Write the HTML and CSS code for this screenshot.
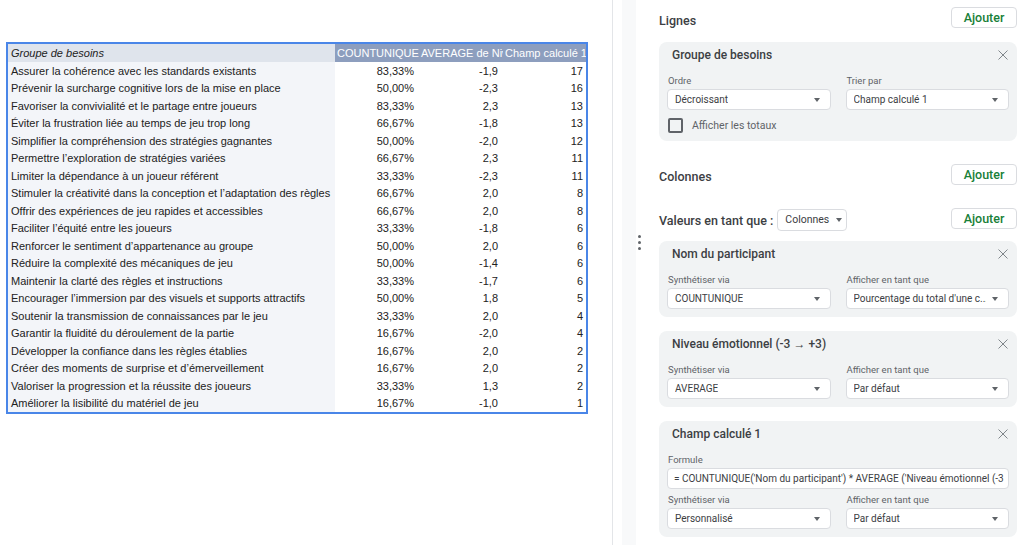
FILE: index.html
```html
<!DOCTYPE html>
<html lang="fr">
<head>
    <title>Tableau croisé dynamique</title>
    <meta charset="utf-8">
    <link rel="stylesheet" href="styles.css">
</head>
<body>
    <div class="page">
        <div class="sheet">
            <table class="pivot">
                <colgroup>
                    <col class="col-group">
                    <col class="col-num">
                    <col class="col-num">
                    <col class="col-last">
                </colgroup>
                <thead>
                    <tr>
                        <th class="head-group">Groupe de besoins</th>
                        <th>COUNTUNIQUE de Nom du participant</th>
                        <th>AVERAGE de Niveau émotionnel</th>
                        <th>Champ calculé 1</th>
                    </tr>
                </thead>
                <tbody>
                    <tr><td>Assurer la cohérence avec les standards existants</td><td>83,33%</td><td>-1,9</td><td>17</td></tr>
                    <tr><td>Prévenir la surcharge cognitive lors de la mise en place</td><td>50,00%</td><td>-2,3</td><td>16</td></tr>
                    <tr><td>Favoriser la convivialité et le partage entre joueurs</td><td>83,33%</td><td>2,3</td><td>13</td></tr>
                    <tr><td>Éviter la frustration liée au temps de jeu trop long</td><td>66,67%</td><td>-1,8</td><td>13</td></tr>
                    <tr><td>Simplifier la compréhension des stratégies gagnantes</td><td>50,00%</td><td>-2,0</td><td>12</td></tr>
                    <tr><td>Permettre l’exploration de stratégies variées</td><td>66,67%</td><td>2,3</td><td>11</td></tr>
                    <tr><td>Limiter la dépendance à un joueur référent</td><td>33,33%</td><td>-2,3</td><td>11</td></tr>
                    <tr><td>Stimuler la créativité dans la conception et l’adaptation des règles</td><td>66,67%</td><td>2,0</td><td>8</td></tr>
                    <tr><td>Offrir des expériences de jeu rapides et accessibles</td><td>66,67%</td><td>2,0</td><td>8</td></tr>
                    <tr><td>Faciliter l’équité entre les joueurs</td><td>33,33%</td><td>-1,8</td><td>6</td></tr>
                    <tr><td>Renforcer le sentiment d’appartenance au groupe</td><td>50,00%</td><td>2,0</td><td>6</td></tr>
                    <tr><td>Réduire la complexité des mécaniques de jeu</td><td>50,00%</td><td>-1,4</td><td>6</td></tr>
                    <tr><td>Maintenir la clarté des règles et instructions</td><td>33,33%</td><td>-1,7</td><td>6</td></tr>
                    <tr><td>Encourager l’immersion par des visuels et supports attractifs</td><td>50,00%</td><td>1,8</td><td>5</td></tr>
                    <tr><td>Soutenir la transmission de connaissances par le jeu</td><td>33,33%</td><td>2,0</td><td>4</td></tr>
                    <tr><td>Garantir la fluidité du déroulement de la partie</td><td>16,67%</td><td>-2,0</td><td>4</td></tr>
                    <tr><td>Développer la confiance dans les règles établies</td><td>16,67%</td><td>2,0</td><td>2</td></tr>
                    <tr><td>Créer des moments de surprise et d’émerveillement</td><td>16,67%</td><td>2,0</td><td>2</td></tr>
                    <tr><td>Valoriser la progression et la réussite des joueurs</td><td>33,33%</td><td>1,3</td><td>2</td></tr>
                    <tr><td>Améliorer la lisibilité du matériel de jeu</td><td>16,67%</td><td>-1,0</td><td>1</td></tr>
                </tbody>
            </table>
        </div>
        <div class="rail"><div class="rail-strip"></div></div>
        <aside class="editor">
            <div class="section-head section-top">
                <span class="section-label">Lignes</span>
                <button class="add">Ajouter</button>
            </div>
            <div class="card card-first">
                <div class="card-title">
                    <span>Groupe de besoins</span>
                    <svg class="close" width="10" height="10" viewBox="0 0 10 10"><path d="M0.5 0.5 L9.5 9.5 M9.5 0.5 L0.5 9.5"/></svg>
                </div>
                <div class="fields">
                    <div class="field">
                        <div class="field-label">Ordre</div>
                        <div class="select"><span>Décroissant</span><i class="caret"></i></div>
                    </div>
                    <div class="field">
                        <div class="field-label">Trier par</div>
                        <div class="select"><span>Champ calculé 1</span><i class="caret"></i></div>
                    </div>
                </div>
                <div class="check-row">
                    <span class="checkbox"></span>
                    <span>Afficher les totaux</span>
                </div>
            </div>

            <div class="section-head section-gap">
                <span class="section-label">Colonnes</span>
                <button class="add">Ajouter</button>
            </div>

            <div class="section-head section-gap">
                <span class="values-label">
                    <span class="section-label">Valeurs en tant que :</span>
                    <span class="mini-select">Colonnes<i class="caret"></i></span>
                </span>
                <button class="add">Ajouter</button>
            </div>

            <div class="card card-values">
                <div class="handle"><i></i><i></i><i></i></div>
                <div class="card-title">
                    <span>Nom du participant</span>
                    <svg class="close" width="10" height="10" viewBox="0 0 10 10"><path d="M0.5 0.5 L9.5 9.5 M9.5 0.5 L0.5 9.5"/></svg>
                </div>
                <div class="fields">
                    <div class="field">
                        <div class="field-label">Synthétiser via</div>
                        <div class="select"><span>COUNTUNIQUE</span><i class="caret"></i></div>
                    </div>
                    <div class="field">
                        <div class="field-label">Afficher en tant que</div>
                        <div class="select"><span>Pourcentage du total d'une c...</span><i class="caret"></i></div>
                    </div>
                </div>
            </div>

            <div class="card">
                <div class="card-title">
                    <span>Niveau émotionnel (-3 → +3)</span>
                    <svg class="close" width="10" height="10" viewBox="0 0 10 10"><path d="M0.5 0.5 L9.5 9.5 M9.5 0.5 L0.5 9.5"/></svg>
                </div>
                <div class="fields">
                    <div class="field">
                        <div class="field-label">Synthétiser via</div>
                        <div class="select"><span>AVERAGE</span><i class="caret"></i></div>
                    </div>
                    <div class="field">
                        <div class="field-label">Afficher en tant que</div>
                        <div class="select"><span>Par défaut</span><i class="caret"></i></div>
                    </div>
                </div>
            </div>

            <div class="card">
                <div class="card-title">
                    <span>Champ calculé 1</span>
                    <svg class="close" width="10" height="10" viewBox="0 0 10 10"><path d="M0.5 0.5 L9.5 9.5 M9.5 0.5 L0.5 9.5"/></svg>
                </div>
                <div class="field-label">Formule</div>
                <div class="formula">= COUNTUNIQUE('Nom du participant') * AVERAGE ('Niveau émotionnel (-3 → +3)')</div>
                <div class="fields fields-after">
                    <div class="field">
                        <div class="field-label">Synthétiser via</div>
                        <div class="select"><span>Personnalisé</span><i class="caret"></i></div>
                    </div>
                    <div class="field">
                        <div class="field-label">Afficher en tant que</div>
                        <div class="select"><span>Par défaut</span><i class="caret"></i></div>
                    </div>
                </div>
            </div>
        </aside>
    </div>
</body>
</html>
```

FILE: styles.css
```css
html, body {
    margin: 0;
    height: 100%;
    background: #fff;
}
.page {
    display: flex;
    width: 1024px;
    height: 545px;
    overflow: hidden;
}

/* sheet side */
.sheet {
    width: 612px;
    flex: none;
    padding: 42px 0 0 6px;
    box-sizing: border-box;
}
.pivot {
    border-collapse: collapse;
    table-layout: fixed;
    width: 582px;
    border: 2px solid #4a86e8;
    font-family: "Liberation Sans", Arial, sans-serif;
    font-size: 11px;
    color: #222;
}
.col-group { width: 328px; }
.col-num { width: 84px; }
.col-last { width: 84px; }
.pivot th {
    height: 18px;
    padding: 0 0 0 2px;
    background: #8d9ebe;
    color: #fff;
    font-weight: normal;
    text-align: left;
    white-space: nowrap;
    overflow: hidden;
    text-overflow: clip;
}
.pivot th.head-group {
    background: #dfe4ec;
    color: #222;
    font-style: italic;
    padding-left: 3px;
}
.pivot td {
    height: 17.5px;
    padding: 0 5px 0 0;
    text-align: right;
    white-space: nowrap;
    overflow: hidden;
}
.pivot td:first-child {
    text-align: left;
    padding: 0 0 0 3px;
    background: #f3f5f9;
}
.pivot td:last-child {
    padding-right: 3px;
}

/* side rail */
.rail {
    width: 24px;
    flex: none;
    border-left: 1px solid #e3e5e8;
    padding-left: 9px;
    box-sizing: border-box;
}
.rail-strip {
    width: 14px;
    height: 100%;
    background: #f8f9fa;
}

/* editor panel */
.editor {
    flex: none;
    width: 388px;
    box-sizing: border-box;
    padding: 7px 7px 0 23px;
    font-family: Roboto, "Noto Sans", sans-serif;
    color: #3c4043;
}
.section-head {
    display: flex;
    align-items: center;
    justify-content: space-between;
    height: 21px;
    font-size: 12.5px;
    font-weight: 500;
    color: #3c4043;
}
.section-label {
    padding-top: 3px;
}
.section-top .section-label {
    padding-top: 5px;
}
.section-gap {
    margin-top: 23px;
}
.add {
    width: 66px;
    height: 21px;
    padding: 0;
    border: 1px solid #dadce0;
    border-radius: 4px;
    background: #fff;
    color: #188038;
    font-family: Roboto, "Noto Sans", sans-serif;
    font-size: 12.5px;
    font-weight: 500;
}
.values-label {
    display: flex;
    align-items: center;
    gap: 4px;
}
.mini-select {
    display: inline-flex;
    align-items: center;
    justify-content: space-between;
    gap: 7px;
    width: 70px;
    height: 22px;
    margin-top: 2px;
    padding: 0 6px 0 7px;
    box-sizing: border-box;
    border: 1px solid #dadce0;
    border-radius: 4px;
    font-size: 10.5px;
    font-weight: normal;
    color: #3c4043;
}

.card {
    position: relative;
    margin-top: 14px;
    padding: 0 8px 8px;
    background: #f1f3f4;
    border-radius: 8px;
}
.card-title {
    display: flex;
    align-items: center;
    justify-content: space-between;
    height: 26px;
    padding-left: 5px;
    font-size: 12px;
    font-weight: 500;
    color: #3c4043;
}
.close {
    stroke: #80868b;
    stroke-width: 1;
    fill: none;
    margin-right: 1px;
}
.fields {
    display: grid;
    grid-template-columns: minmax(0, 1fr) minmax(0, 1fr);
    column-gap: 15px;
}
.fields-after .field-label {
    margin-top: 3px;
}
.field {
    min-width: 0;
}
.field-label {
    height: 16px;
    margin-top: 5px;
    padding-left: 1px;
    line-height: 16px;
    font-size: 9.5px;
    color: #5f6368;
}
.select, .formula {
    display: flex;
    align-items: center;
    justify-content: space-between;
    gap: 6px;
    height: 21px;
    padding: 0 10px 0 7px;
    box-sizing: border-box;
    background: #fff;
    border: 1px solid #dadce0;
    border-radius: 4px;
    font-size: 10px;
    color: #3c4043;
}
.select span {
    white-space: nowrap;
    overflow: hidden;
}
.formula {
    display: block;
    line-height: 19px;
    padding: 0 0 0 6px;
    white-space: nowrap;
    overflow: hidden;
}
.caret {
    flex: none;
    width: 0;
    height: 0;
    border-left: 3.5px solid transparent;
    border-right: 3.5px solid transparent;
    border-top: 4px solid #5f6368;
}
.check-row {
    display: flex;
    align-items: center;
    gap: 9px;
    height: 15px;
    margin-top: 8px;
    padding-left: 1px;
    font-size: 10.5px;
    color: #5f6368;
}
.checkbox {
    width: 11px;
    height: 11px;
    border: 2px solid #5f6368;
    border-radius: 2px;
}
.card-values {
    margin-top: 12px;
}
.handle {
    position: absolute;
    left: -21px;
    top: -6px;
    display: flex;
    flex-direction: column;
    gap: 3px;
}
.handle i {
    width: 3px;
    height: 3px;
    border-radius: 50%;
    background: #5f6368;
}
```
